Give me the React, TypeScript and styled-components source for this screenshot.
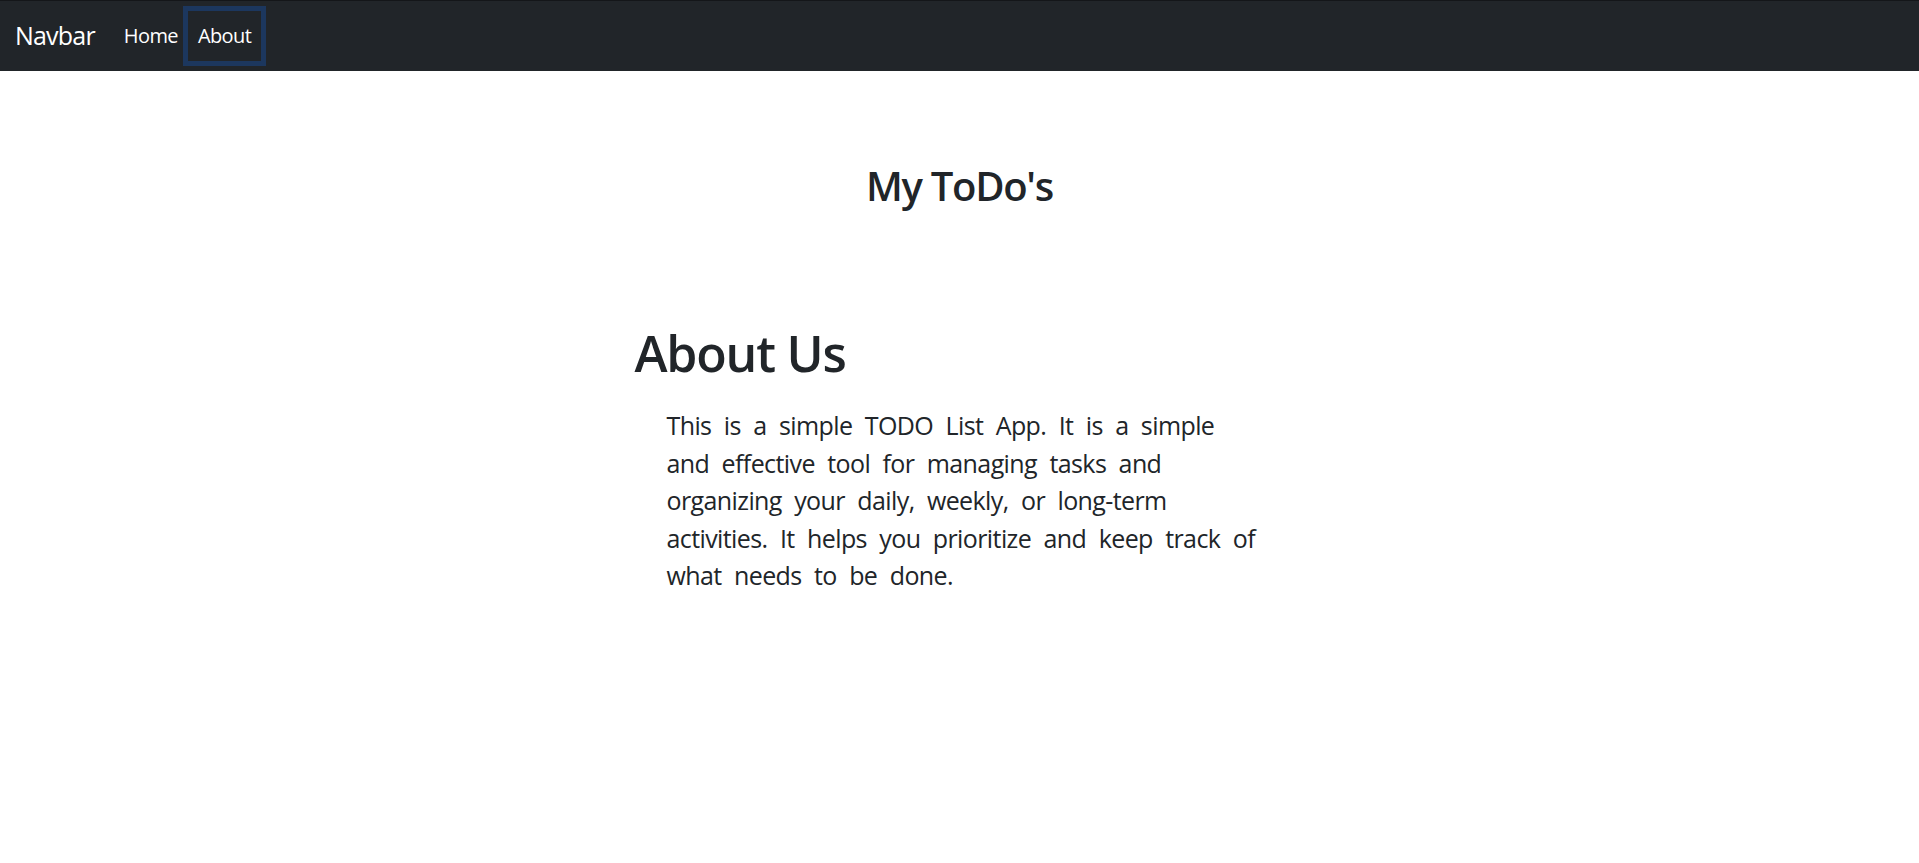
import styled, { createGlobalStyle } from "styled-components";

const GlobalStyle = createGlobalStyle`
  body {
    margin: 0;
    background: #ffffff;
    color: #212529;
    font-family: "Open Sans", "Noto Sans", sans-serif;
  }
  * {
    box-sizing: border-box;
  }
`;

const Navbar = styled.nav`
  background: #212529;
  border-top: 1px solid #141619;
  height: 71px;
  padding: 10px 15px;
  display: flex;
  align-items: center;
`;

const Brand = styled.a`
  color: #ffffff;
  font-size: 25px;
  line-height: 37.5px;
  letter-spacing: -0.8px;
  padding: 6px 0;
  margin-right: 19px;
  text-decoration: none;
`;

const NavList = styled.ul`
  display: flex;
  list-style: none;
  margin: 0;
  padding: 0;
`;

const NavLink = styled.a<{ $focused?: boolean }>`
  display: block;
  color: #ffffff;
  font-size: 20px;
  line-height: 30px;
  letter-spacing: -0.6px;
  padding: 10px;
  text-decoration: none;
  box-shadow: ${(p) => (p.$focused ? "0 0 0 5px rgb(28, 55, 94)" : "none")};
`;

const Title = styled.h2`
  text-align: center;
  font-size: 40px;
  font-weight: 600;
  line-height: 1.2;
  letter-spacing: -1.3px;
  margin: 91px 0 0;
`;

const AboutSection = styled.section`
  width: 650px;
  margin: 113px auto 0;
`;

const Heading = styled.h1`
  font-size: 50px;
  font-weight: 600;
  line-height: 1.2;
  letter-spacing: -1.2px;
  margin: 0;
`;

const Text = styled.p`
  margin: 24px 0 0 32px;
  font-size: 25px;
  line-height: 37.5px;
  letter-spacing: -0.6px;
  word-spacing: 6.5px;
`;

const Line = styled.span`
  display: block;
  white-space: nowrap;
`;

const lines = [
  "This is a simple TODO List App. It is a simple",
  "and effective tool for managing tasks and",
  "organizing your daily, weekly, or long-term",
  "activities. It helps you prioritize and keep track of",
  "what needs to be done.",
];

export default function App() {
  return (
    <>
      <GlobalStyle />
      <Navbar>
        <Brand href="#">Navbar</Brand>
        <NavList>
          <li>
            <NavLink href="#">Home</NavLink>
          </li>
          <li>
            <NavLink href="#" $focused>
              About
            </NavLink>
          </li>
        </NavList>
      </Navbar>
      <Title>My ToDo's</Title>
      <AboutSection>
        <Heading>About Us</Heading>
        <Text>
          {lines.map((l) => (
            <Line key={l}>{l}</Line>
          ))}
        </Text>
      </AboutSection>
    </>
  );
}
